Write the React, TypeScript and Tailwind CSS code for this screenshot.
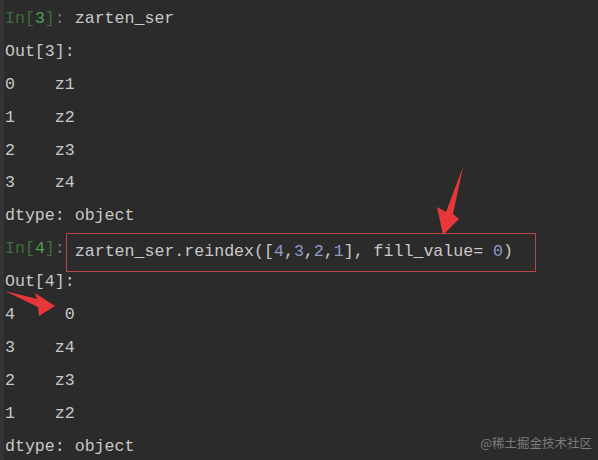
const mono = { fontFamily: '"Liberation Mono", "DejaVu Sans Mono", monospace' };

const Prompt = ({ kind, n }: { kind: "In" | "Out"; n: number }) =>
  kind === "In" ? (
    <span>
      <span className="text-[#3f6e3f]">In[</span>
      <span className="text-[#4fa04f]">{n}</span>
      <span className="text-[#3f6e3f]">]</span>
      <span className="text-[#7a7a7a]">:</span>
    </span>
  ) : (
    <span>Out[{n}]:</span>
  );

const Num = ({ v }: { v: string }) => <span className="text-[#8e9bc4]">{v}</span>;

const Row = ({ children }: { children: React.ReactNode }) => (
  <div className="h-[32.9px] flex items-center whitespace-pre">{children}</div>
);

export default function App() {
  return (
    <div className="relative w-[598px] h-[460px] overflow-hidden bg-[#2b2b2b] flex">
      <div className="w-[4px] bg-[#343434]" />
      <div className="flex-1 pl-[1px] pt-[3px] text-[16.6px] text-[#c8c8c8]" style={mono}>
        <Row>
          <Prompt kind="In" n={3} /> zarten_ser
        </Row>
        <Row>
          <Prompt kind="Out" n={3} />
        </Row>
        <Row>0    z1</Row>
        <Row>1    z2</Row>
        <Row>2    z3</Row>
        <Row>3    z4</Row>
        <Row>dtype: object</Row>
        <Row>
          <Prompt kind="In" n={4} />
          <span className="h-[39px] mt-[6px] ml-[1px] flex items-center border border-[#b84848] pl-[8px] pr-[20px] w-[470px]">
            zarten_ser.reindex([<Num v="4" />,<Num v="3" />,<Num v="2" />,<Num v="1" />], fill_value= <Num v="0" />)
          </span>
        </Row>
        <Row>
          <Prompt kind="Out" n={4} />
        </Row>
        <Row>4     0</Row>
        <Row>3    z4</Row>
        <Row>2    z3</Row>
        <Row>1    z2</Row>
        <Row>dtype: object</Row>
      </div>

      {/* red annotation arrows */}
      <svg className="absolute inset-0 pointer-events-none" width="598" height="460">
        <polygon points="463,167 453,214 459,219 443,235 437,207 446,212" fill="#e8373a" />
        <polygon points="5,291 37,299 35,293 55,306 39,316 38,307" fill="#e8373a" />
      </svg>

      <div
        className="absolute right-[6px] bottom-[7px] text-[12.5px] text-[#7c7c7c]"
        style={{ fontFamily: '"Noto Sans CJK SC", "Noto Sans", sans-serif' }}
      >
        @稀土掘金技术社区
      </div>
    </div>
  );
}
